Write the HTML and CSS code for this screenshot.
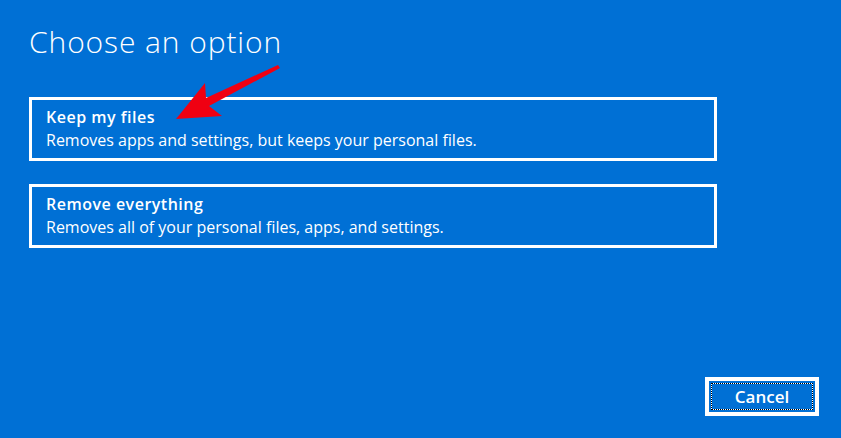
FILE: index.html
```html
<!DOCTYPE html>
<html>
<head>
<meta charset="utf-8">
<link rel="stylesheet" href="styles.css">
</head>
<body>
<div class="screen">
  <h1 class="title">Choose an option</h1>
  <div class="options">
    <div class="option">
      <div class="option-title">Keep my files</div>
      <div class="option-desc">Removes apps and settings, but keeps your personal files.</div>
    </div>
    <div class="option">
      <div class="option-title">Remove everything</div>
      <div class="option-desc">Removes all of your personal files, apps, and settings.</div>
    </div>
  </div>
  <div class="footer">
    <button class="cancel"><span class="focus">Cancel</span></button>
  </div>
  <svg class="arrow" width="841" height="438" viewBox="0 0 841 438">
    <polygon points="176,119 205,83 206,98 278,65 280,68 209,106 222,116" fill="#f00012"/>
  </svg>
</div>
</body>
</html>
```
FILE: styles.css
```css
html, body {
  margin: 0;
  padding: 0;
}
body {
  width: 841px;
  height: 438px;
  overflow: hidden;
  background: #0070d5;
  font-family: "Open Sans", "Noto Sans", sans-serif;
  color: #fff;
}
.screen {
  position: relative;
  width: 841px;
  height: 438px;
  padding: 0 0 0 29px;
  box-sizing: border-box;
}
.title {
  margin: 0;
  padding-top: 24px;
  font-size: 30px;
  font-weight: 300;
  line-height: 36px;
  height: 97px;
  box-sizing: border-box;
  letter-spacing: 0.9px;
}
.options {
  display: flex;
  flex-direction: column;
  gap: 23px;
  width: 688px;
}
.option {
  border: 3px solid #fff;
  padding: 6px 14px 0;
  height: 64px;
  box-sizing: border-box;
}
.option-title {
  font-weight: 600;
  font-size: 16px;
  line-height: 23px;
  letter-spacing: 0.5px;
}
.option-desc {
  font-size: 16px;
  line-height: 23px;
  letter-spacing: 0;
}
.footer {
  display: flex;
  justify-content: flex-end;
  padding-top: 129px;
  padding-right: 22px;
}
.cancel {
  width: 114px;
  height: 39px;
  border: 4px solid #fff;
  background: #0070d5;
  padding: 2px;
  margin: 0;
  box-sizing: border-box;
  display: flex;
}
.focus {
  flex: 1;
  border: 1px dotted #000;
  background: linear-gradient(#0070d5, #0070d5) padding-box, linear-gradient(#fff, #fff) border-box;
  color: #fff;
  font-family: "Open Sans", "Noto Sans", sans-serif;
  font-weight: 600;
  font-size: 17px;
  line-height: 25px;
  text-align: center;
}
.arrow {
  position: absolute;
  left: 0;
  top: 0;
  pointer-events: none;
}
```
